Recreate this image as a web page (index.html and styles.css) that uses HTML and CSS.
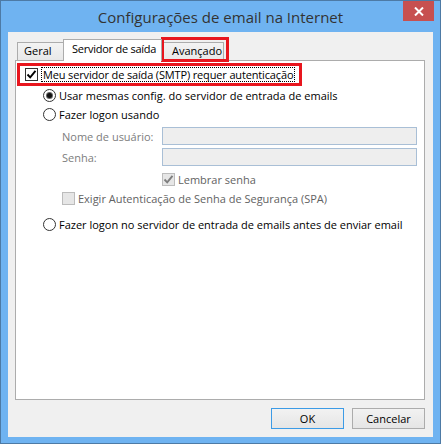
FILE: index.html
```html
<!DOCTYPE html>
<html lang="pt">
<head>
<meta charset="utf-8">
<title>Configurações de email na Internet</title>
<link rel="stylesheet" href="styles.css">
</head>
<body>
<div class="window">
  <div class="titlebar">
    <span class="title">Configurações de email na Internet</span>
    <div class="close">
      <svg width="10" height="9" viewBox="0 0 10 9"><path d="M1 0.5 L9 8.5 M9 0.5 L1 8.5" stroke="#fff" stroke-width="2" fill="none"/></svg>
    </div>
  </div>
  <div class="client">
    <div class="tabs">
      <div class="tab tab-geral">Geral</div>
      <div class="tab tab-active">Servidor de saída</div>
      <div class="tab tab-adv">Avançado<span class="mark"></span></div>
    </div>
    <div class="panel">
      <div class="highlight">
        <span class="check"><svg width="11" height="11" viewBox="0 0 11 11"><path d="M1.5 5.5 L4.2 8.3 L9.5 1.8" stroke="#000" stroke-width="1.9" fill="none"/></svg></span>
        <span class="focus">Meu servidor de saída (SMTP) requer autenticação</span>
      </div>
      <div class="opt r1"><span class="radio on"></span><span>Usar mesmas config. do servidor de entrada de emails</span></div>
      <div class="opt r2"><span class="radio"></span><span>Fazer logon usando</span></div>
      <div class="field f1"><span class="label">Nome de usuário:</span><span class="input"></span></div>
      <div class="field f2"><span class="label">Senha:</span><span class="input"></span></div>
      <div class="opt sub lembrar"><span class="check disabled"><svg width="11" height="11" viewBox="0 0 11 11"><path d="M1.5 5.5 L4.2 8.3 L9.5 1.8" stroke="#7e7e7e" stroke-width="1.9" fill="none"/></svg></span><span>Lembrar senha</span></div>
      <div class="opt sub exigir"><span class="check disabled"></span><span>Exigir Autenticação de Senha de Segurança (SPA)</span></div>
      <div class="opt r3"><span class="radio"></span><span>Fazer logon no servidor de entrada de emails antes de enviar email</span></div>
    </div>
    <div class="buttons">
      <button class="btn btn-default">OK</button>
      <button class="btn">Cancelar</button>
    </div>
  </div>
</div>
</body>
</html>
```

FILE: styles.css
```css
* { box-sizing: border-box; margin: 0; }
body {
  margin: 0;
  background: #ffffff;
  font-family: "Open Sans", "Noto Sans", sans-serif;
  font-size: 11px;
  color: #000;
}
.window {
  position: relative;
  width: 441px;
  height: 444px;
  border: 1px solid #4d7aa5;
  background: #6fb3f1;
  padding: 0 7px 6px 7px;
  display: flex;
  flex-direction: column;
}
.titlebar {
  height: 31px;
  display: flex;
  align-items: center;
  justify-content: center;
}
.title {
  font-size: 15px;
  color: #333;
}
.close {
  position: absolute;
  top: 0;
  right: 6px;
  width: 31px;
  height: 20px;
  background: #c75050;
  display: flex;
  align-items: center;
  justify-content: center;
}
.close svg { display: block; }
.client {
  flex: 1;
  background: #f0f0f0;
  padding: 7px 8px 8px 7px;
  display: flex;
  flex-direction: column;
}
.tabs {
  display: flex;
  align-items: flex-end;
  height: 21px;
  padding-left: 2px;
  position: relative;
  z-index: 1;
}
.tab {
  position: relative;
  height: 18px;
  border: 1px solid #acacac;
  border-bottom: none;
  background: linear-gradient(#f3f3f3, #e8e8e8);
  line-height: 15px;
  padding-left: 6px;
  white-space: nowrap;
}
.tab-geral { width: 48px; }
.tab-active {
  width: 99px;
  height: 22px;
  margin: 0 -2px -1px -2px;
  background: #fff;
  padding-left: 8px;
  letter-spacing: -0.25px;
  line-height: 18px;
  z-index: 2;
}
.tab-adv { width: 64px; padding-left: 11px; }
.mark {
  position: absolute;
  left: 0;
  top: -6px;
  width: 68px;
  height: 25px;
  border: 3px solid #e8161e;
}
.panel {
  height: 340px;
  border: 1px solid #acacac;
  background: #fff;
  display: flex;
  flex-direction: column;
  align-items: flex-start;
}
.highlight {
  margin-top: 2px;
  margin-left: 1px;
  width: 285px;
  height: 23px;
  border: 3px solid #e8161e;
  display: flex;
  align-items: center;
  padding-left: 5px;
}
.check {
  width: 13px;
  height: 13px;
  border: 1px solid #333;
  background: #fff;
  display: flex;
  align-items: center;
  justify-content: center;
  flex: none;
}
.check svg { display: block; }
.check.disabled {
  border-color: #bcbcbc;
  background: #e6e6e6;
}
.focus {
  margin-left: 3px;
  border: 1px dotted #000;
  padding: 0 1px;
  line-height: 13px;
  letter-spacing: -0.15px;
  white-space: nowrap;
}
.opt {
  display: flex;
  align-items: center;
  height: 18px;
  margin-left: 27px;
  gap: 3px;
  white-space: nowrap;
}
.r2 { height: 20px; }
.radio {
  width: 13px;
  height: 13px;
  border: 1px solid #333;
  border-radius: 50%;
  background: #fff;
  flex: none;
  display: flex;
  align-items: center;
  justify-content: center;
}
.radio.on::after {
  content: "";
  width: 5px;
  height: 5px;
  border-radius: 50%;
  background: #111;
  box-shadow: 0 0 0 1px #666;
}
.field {
  display: flex;
  align-items: center;
  height: 18px;
  margin-left: 46px;
  margin-top: 3px;
}
.label {
  width: 100px;
  color: #7d7d7d;
}
.input {
  width: 255px;
  height: 18px;
  border: 1px solid #a9bfd6;
  background: #eeeeee;
}
.sub { color: #626262; }
.lembrar { margin-left: 146px; margin-top: 4px; }
.exigir { margin-left: 46px; margin-top: 1px; }
.r3 { margin-top: 8px; }
.buttons {
  margin-top: 8px;
  display: flex;
  justify-content: flex-end;
  gap: 8px;
}
.btn {
  width: 73px;
  height: 21px;
  border: 1px solid #acacac;
  background: linear-gradient(#f2f2f2, #e5e5e5);
  font: inherit;
  color: #000;
  padding: 0;
}
.btn-default { border-color: #3c9be6; }
```
